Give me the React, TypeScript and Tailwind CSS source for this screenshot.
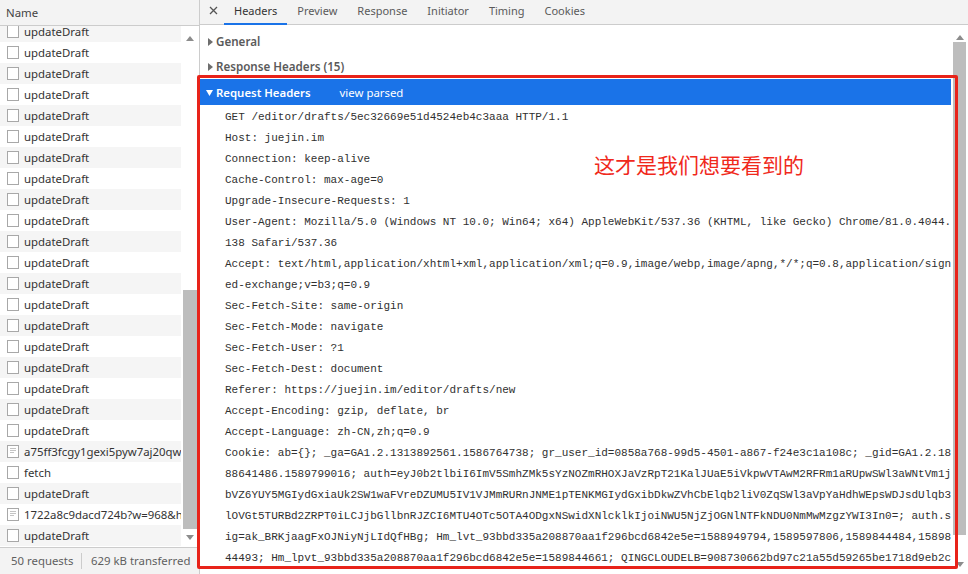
const ui = "font-['Noto_Sans','Open_Sans',sans-serif]";

const names: string[] = [
  ...Array(20).fill("updateDraft"),
  "a75ff3fcgy1gexi5pyw7aj20qw.jpg",
  "fetch",
  "updateDraft",
  "1722a8c9dacd724b?w=968&h=574",
  "updateDraft",
];

const lines = [
  "GET /editor/drafts/5ec32669e51d4524eb4c3aaa HTTP/1.1",
  "Host: juejin.im",
  "Connection: keep-alive",
  "Cache-Control: max-age=0",
  "Upgrade-Insecure-Requests: 1",
  "User-Agent: Mozilla/5.0 (Windows NT 10.0; Win64; x64) AppleWebKit/537.36 (KHTML, like Gecko) Chrome/81.0.4044.",
  "138 Safari/537.36",
  "Accept: text/html,application/xhtml+xml,application/xml;q=0.9,image/webp,image/apng,*/*;q=0.8,application/sign",
  "ed-exchange;v=b3;q=0.9",
  "Sec-Fetch-Site: same-origin",
  "Sec-Fetch-Mode: navigate",
  "Sec-Fetch-User: ?1",
  "Sec-Fetch-Dest: document",
  "Referer: https://juejin.im/editor/drafts/new",
  "Accept-Encoding: gzip, deflate, br",
  "Accept-Language: zh-CN,zh;q=0.9",
  "Cookie: ab={}; _ga=GA1.2.1313892561.1586764738; gr_user_id=0858a768-99d5-4501-a867-f24e3c1a108c; _gid=GA1.2.18",
  "88641486.1589799016; auth=eyJ0b2tlbiI6ImV5SmhZMk5sYzNOZmRHOXJaVzRpT21KalJUaE5iVkpwVTAwM2RFRm1aRUpwSWl3aWNtVm1j",
  "bVZ6YUY5MGIydGxiaUk2SW1waFVreDZUMU5IV1VJMmRURnJNME1pTENKMGIydGxibDkwZVhCbElqb2liV0ZqSWl3aVpYaHdhWEpsWDJsdUlqb3",
  "lOVGt5TURBd2ZRPT0iLCJjbGllbnRJZCI6MTU4OTc5OTA4ODgxNSwidXNlcklkIjoiNWU5NjZjOGNlNTFkNDU0NmMwMzgzYWI3In0=; auth.s",
  "ig=ak_BRKjaagFxOJNiyNjLIdQfHBg; Hm_lvt_93bbd335a208870aa1f296bcd6842e5e=1588949794,1589597806,1589844484,15898",
  "44493; Hm_lpvt_93bbd335a208870aa1f296bcd6842e5e=1589844661; QINGCLOUDELB=908730662bd97c21a55d59265be1718d9eb2c",
];

const tabs = ["Headers", "Preview", "Response", "Initiator", "Timing", "Cookies"];

function FileIcon({ doc }: { doc: boolean }) {
  return (
    <svg width="12" height="13" viewBox="0 0 12 13" className="shrink-0">
      <rect x="0.5" y="0.5" width="11" height="12" fill="#fff" stroke="#a8a8a8" />
      {doc && (
        <g stroke="#c4c4c4">
          <path d="M3 3.5h6M3 5.5h6M3 7.5h4" />
        </g>
      )}
    </svg>
  );
}

function Arrow({ up }: { up: boolean }) {
  return (
    <svg width="8" height="5" viewBox="0 0 8 5">
      <path d={up ? "M0 5 L4 0 L8 5 Z" : "M0 0 L4 5 L8 0 Z"} fill="#8c8c8c" />
    </svg>
  );
}

function Caret({ open, color }: { open: boolean; color: string }) {
  return (
    <svg width="7" height="8" viewBox="0 0 7 8" className="shrink-0">
      <path d={open ? "M0 1 L7 1 L3.5 7 Z" : "M1 0 L6 4 L1 8 Z"} fill={color} />
    </svg>
  );
}

export default function App() {
  return (
    <div className={`relative flex h-[574px] w-[968px] overflow-hidden bg-white text-[11.4px] text-[#333] ${ui}`}>
      {/* Left: request list */}
      <div className="flex w-[200px] shrink-0 flex-col border-r border-[#ccc]">
        <div className="flex h-[26px] shrink-0 items-center border-b border-[#ccc] bg-[#f3f3f3] pl-[6px] text-[#444]">
          Name
        </div>
        <div className="flex min-h-0 flex-1">
          <div className="h-full w-[181px] shrink-0 overflow-hidden">
            <div className="-mt-[5px]">
              {names.map((n, i) => (
                <div
                  key={i}
                  className={`flex h-[21px] items-center gap-[5px] overflow-hidden pl-[7px] ${i % 2 === 0 ? "bg-[#f5f5f5]" : "bg-white"}`}
                >
                  <FileIcon doc={n.includes("?") || n.includes(".jpg")} />
                  <span className="whitespace-nowrap">{n}</span>
                </div>
              ))}
            </div>
          </div>
          <div className="flex w-[18px] shrink-0 flex-col items-center">
            <div className="flex h-[16px] items-end justify-center pb-[1px]">
              <Arrow up />
            </div>
            <div className="h-[248px] shrink-0" />
            <div className="h-[239px] w-[14px] shrink-0 bg-[#bdbdbd]" />
            <div className="mt-[6px] flex justify-center">
              <Arrow up={false} />
            </div>
          </div>
        </div>
        <div className="flex h-[27px] shrink-0 items-center whitespace-nowrap border-t border-[#ccc] bg-[#f3f3f3] text-[#5f5f5f]">
          <span className="w-[81px] shrink-0 pl-[11px]">50 requests</span>
          <div className="h-[16px] w-px shrink-0 bg-[#ccc]" />
          <span className="pl-[9px]">629 kB transferred</span>
        </div>
      </div>

      {/* Right: details */}
      <div className="flex min-w-0 flex-1 flex-col">
        <div className="flex h-[25px] shrink-0 items-stretch border-b border-[#ccc] bg-[#f3f3f3] text-[11px] text-[#5a5a5a]">
          <div className="flex w-[24px] items-center justify-center pb-[3px] pl-[2px]">
            <svg width="9" height="9" viewBox="0 0 9 9">
              <path d="M1 1 L8 8 M8 1 L1 8" stroke="#555" strokeWidth="1.3" />
            </svg>
          </div>
          {tabs.map((t, i) => (
            <div
              key={t}
              className={`flex items-center px-[10px] pb-[1px] ${i === 0 ? "-mb-px border-b-2 border-[#1a73e8] text-[#333]" : ""}`}
            >
              {t}
            </div>
          ))}
        </div>
        <div className="flex min-h-0 flex-1">
          <div className="w-[751px] shrink-0 overflow-hidden pt-[4px]">
            <div className="flex h-[25px] items-center gap-[2px] pl-[7px] text-[11.6px] font-semibold text-[#5a5a5a]">
              <Caret open={false} color="#6e6e6e" />
              General
            </div>
            <div className="flex h-[25px] items-center gap-[2px] pl-[7px] text-[11.6px] font-semibold text-[#5a5a5a]">
              <Caret open={false} color="#6e6e6e" />
              Response Headers (15)
            </div>
            <div className="flex h-[26px] items-center bg-[#1a73e8] pl-[6px] pt-[1px] text-white">
              <Caret open color="#fff" />
              <span className="ml-[3px] font-semibold">Request Headers</span>
              <span className="ml-[29px]">view parsed</span>
            </div>
            <div className="pl-[25px] pt-[2px] font-['Liberation_Mono',monospace] text-[11px] leading-[21px] text-[#303030]">
              {lines.map((l, i) => (
                <div key={i} className="whitespace-pre">
                  {l}
                </div>
              ))}
            </div>
          </div>
          <div className="ml-[2px] flex flex-1 flex-col items-center pr-[2px]">
            <div className="flex h-[17px] items-end justify-center pb-[2px]">
              <Arrow up />
            </div>
            <div className="h-[493px] w-[13px] shrink-0 bg-[#bdbdbd]" />
            <div className="mt-[27px]">
              <Arrow up={false} />
            </div>
          </div>
        </div>
      </div>

      {/* Annotation drawn over the screenshot */}
      <div className="pointer-events-none absolute left-[197px] top-[75px] h-[494px] w-[761px] rounded-[2px] border-[3px] border-[#e8231a]" />
      <div className="pointer-events-none absolute left-[594px] top-[150px] whitespace-nowrap font-['Noto_Sans_CJK_SC',sans-serif] text-[21px] leading-[28px] text-[#f0291c]">
        这才是我们想要看到的
      </div>
    </div>
  );
}
